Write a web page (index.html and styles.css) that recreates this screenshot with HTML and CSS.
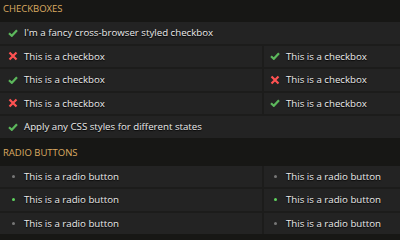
FILE: index.html
```html
<!DOCTYPE html>
<html lang="en">
<head>
    <meta charset="UTF-8">
    <title>Fancy checkboxes</title>
    <link rel="stylesheet" href="styles.css">
</head>
<body>

<div class="group">
    <h2 class="group-title">Checkboxes</h2>
    <ul class="opts">
        <li class="opt wide"><span class="ico"><svg class="check" viewBox="0 0 10 8"><path d="M1 4.2 L3.8 6.8 L9 1.2"/></svg></span>I'm a fancy cross-browser styled checkbox</li>
        <li class="opt"><span class="ico"><svg class="cross" viewBox="0 0 10 10"><path d="M1.5 1.5 L8.5 8.5 M8.5 1.5 L1.5 8.5"/></svg></span>This is a checkbox</li>
        <li class="opt right"><span class="ico"><svg class="check" viewBox="0 0 10 8"><path d="M1 4.2 L3.8 6.8 L9 1.2"/></svg></span>This is a checkbox</li>
        <li class="opt"><span class="ico"><svg class="check" viewBox="0 0 10 8"><path d="M1 4.2 L3.8 6.8 L9 1.2"/></svg></span>This is a checkbox</li>
        <li class="opt right"><span class="ico"><svg class="cross" viewBox="0 0 10 10"><path d="M1.5 1.5 L8.5 8.5 M8.5 1.5 L1.5 8.5"/></svg></span>This is a checkbox</li>
        <li class="opt"><span class="ico"><svg class="cross" viewBox="0 0 10 10"><path d="M1.5 1.5 L8.5 8.5 M8.5 1.5 L1.5 8.5"/></svg></span>This is a checkbox</li>
        <li class="opt right"><span class="ico"><svg class="check" viewBox="0 0 10 8"><path d="M1 4.2 L3.8 6.8 L9 1.2"/></svg></span>This is a checkbox</li>
        <li class="opt wide"><span class="ico"><svg class="check" viewBox="0 0 10 8"><path d="M1 4.2 L3.8 6.8 L9 1.2"/></svg></span>Apply any CSS styles for different states</li>
    </ul>
</div>

<div class="group">
    <h2 class="group-title">Radio buttons</h2>
    <ul class="opts">
        <li class="opt"><span class="ico"><i class="dot"></i></span>This is a radio button</li>
        <li class="opt right"><span class="ico"><i class="dot"></i></span>This is a radio button</li>
        <li class="opt"><span class="ico"><i class="dot on"></i></span>This is a radio button</li>
        <li class="opt right"><span class="ico"><i class="dot on"></i></span>This is a radio button</li>
        <li class="opt"><span class="ico"><i class="dot"></i></span>This is a radio button</li>
        <li class="opt right"><span class="ico"><i class="dot"></i></span>This is a radio button</li>
    </ul>
</div>

</body>
</html>
```

FILE: styles.css
```css
body {
    background-color: #171715;
    font-family: 'Open Sans', sans-serif;
    color: #ececec;
    margin: 0;
    padding: 0;
}
.group + .group {
    margin-top: 6px;
}
.group-title {
    margin: 0 0 4px;
    padding-left: 3px;
    font-size: 9.5px;
    font-weight: normal;
    line-height: 18px;
    text-transform: uppercase;
    color: #dcab62;
}
.opts {
    list-style: none;
    margin: 0;
    padding: 0;
    display: grid;
    grid-template-columns: 262px 1fr;
    gap: 2px;
    background-color: #1c1c1b;
}
.opt {
    display: flex;
    align-items: center;
    height: 21.5px;
    padding-left: 8px;
    background-color: #232323;
    font-size: 9.7px;
    text-shadow: 0 1px 1px #000;
}
.opt.wide {
    grid-column: 1 / -1;
}
.opt.right {
    padding-left: 6px;
}
.ico {
    display: flex;
    align-items: center;
    justify-content: center;
    width: 10px;
    margin-right: 6px;
}
.ico svg {
    fill: none;
    stroke-width: 2.2;
}
.check {
    width: 10px;
    height: 8px;
    stroke: #5cb85c;
}
.cross {
    width: 10px;
    height: 10px;
    stroke: #ff5252;
}
.dot {
    display: block;
    width: 3px;
    height: 3px;
    border-radius: 50%;
    background-color: #777;
}
.dot.on {
    background-color: #5fd45f;
}
```
